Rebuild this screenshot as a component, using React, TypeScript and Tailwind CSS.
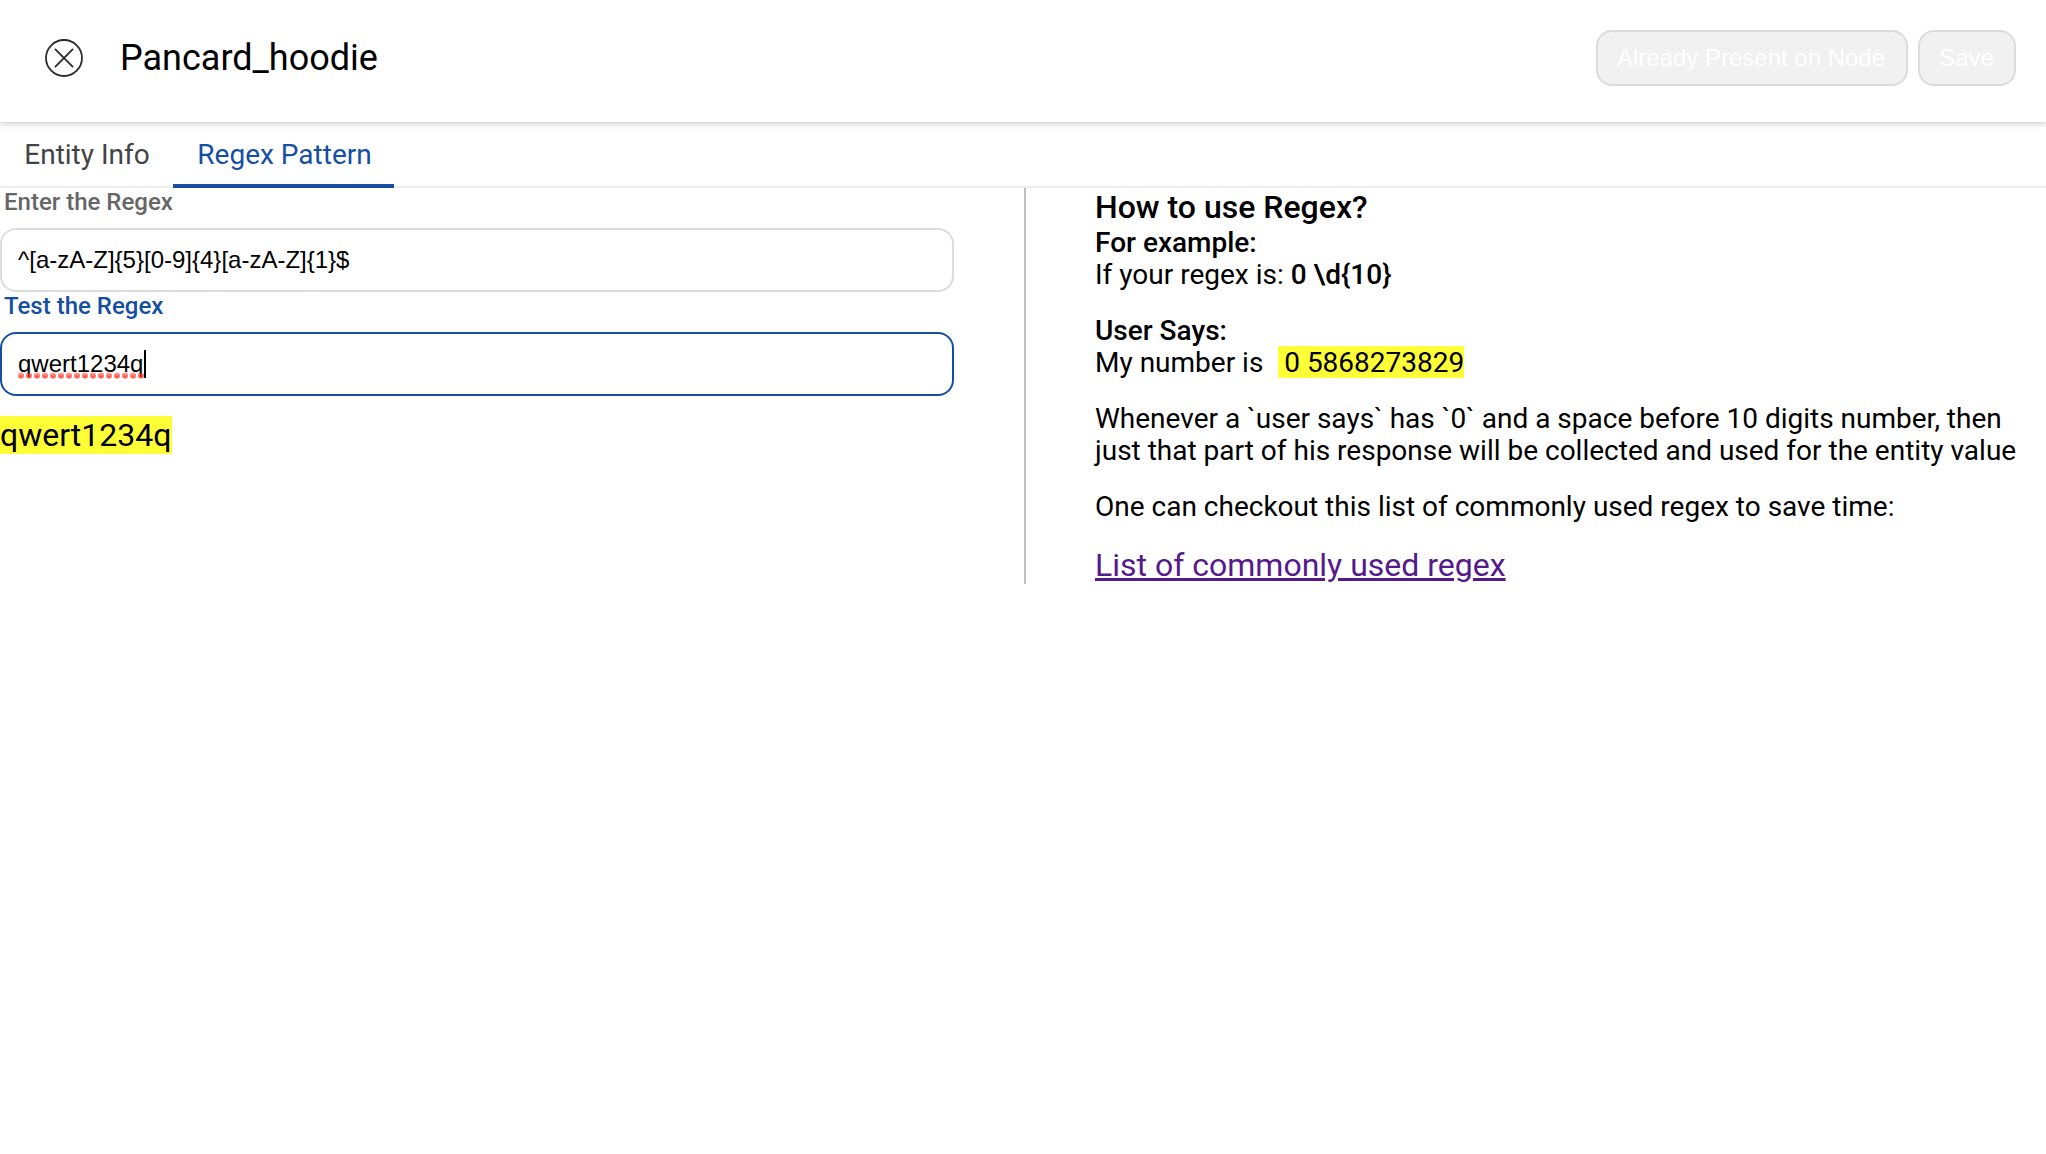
import { useState } from "react";

const tabs = ["Entity Info", "Regex Pattern"];

function CloseIcon() {
  return (
    <svg width="38" height="38" viewBox="0 0 38 38" fill="none" stroke="#2b2b2b" strokeWidth="1.8" strokeLinecap="round">
      <circle cx="19" cy="19" r="18" />
      <path d="M10.4 10.4l17.2 17.2M27.6 10.4l-17.2 17.2" />
    </svg>
  );
}

function SpellingUnderline() {
  return (
    <svg className="absolute left-0 top-[25px]" width="128" height="8">
      <defs>
        <linearGradient id="spelling" x1="0" y1="0" x2="0" y2="1">
          <stop offset="0" stopColor="#ff3b30" stopOpacity="0.45" />
          <stop offset="1" stopColor="#ff3b30" stopOpacity="0.95" />
        </linearGradient>
      </defs>
      {Array.from({ length: 16 }, (_, i) => (
        <circle key={i} cx={3 + i * 8} cy="4.5" r="3" fill="url(#spelling)" />
      ))}
    </svg>
  );
}

function Header() {
  return (
    <header className="relative flex h-[122px] items-start justify-between bg-white pl-[45px] pr-[30px] shadow-[0_2px_6px_rgba(0,0,0,0.2)]">
      <div className="flex items-start pt-[37px]">
        <button aria-label="Close" className="mt-[2px]">
          <CloseIcon />
        </button>
        <h1 className="ml-[37px] text-[36px] leading-[42px]">Pancard_hoodie</h1>
      </div>
      <div className="flex gap-[10px] pt-[30px] font-['Liberation_Sans',Arial,sans-serif] text-[24px] text-white">
        <button disabled className="h-14 w-[312px] whitespace-nowrap rounded-2xl border-2 border-[#dcdcdc] bg-[#f1f1f1] pr-[2px]">
          Already Present on Node
        </button>
        <button disabled className="h-14 w-[98px] rounded-2xl border-2 border-[#dcdcdc] bg-[#f1f1f1] pr-px">
          Save
        </button>
      </div>
    </header>
  );
}

export default function App() {
  const [active, setActive] = useState(1);
  return (
    <div className="min-h-screen overflow-hidden bg-white font-['Roboto',sans-serif] text-black">
      <Header />
      <nav className="flex h-[66px] border-b-2 border-[#ededed] text-[28px]">
        {tabs.map((t, i) => (
          <button
            key={t}
            onClick={() => setActive(i)}
            className={
              i === active
                ? "-mb-[2px] h-[66px] w-[221px] border-b-4 border-[#144fa3] pl-[2px] pt-1 text-[#144fa3]"
                : "-mb-[2px] h-[66px] w-[173px] pl-px text-[#444444]"
            }
          >
            {t}
          </button>
        ))}
      </nav>
      <main className="flex h-[396px]">
        <section className="w-[1024px] shrink-0">
          <label className="block h-10 pl-1 text-[24px] font-medium leading-[28px] text-[#666666]">Enter the Regex</label>
          <div className="flex h-16 w-[954px] items-center rounded-2xl border-2 border-[#dcdcdc] px-4 font-['Liberation_Sans',Arial,sans-serif] text-[24px]">
            {"^[a-zA-Z]{5}[0-9]{4}[a-zA-Z]{1}$"}
          </div>
          <label className="block h-10 pl-1 text-[24px] font-medium leading-[28px] text-[#144fa3]">Test the Regex</label>
          <div className="flex h-16 w-[954px] items-center rounded-2xl border-2 border-[#144fa3] px-4 font-['Liberation_Sans',Arial,sans-serif] text-[24px]">
            <span className="relative w-[126px]">
              qwert1234q
              <SpellingUnderline />
            </span>
            <span className="h-7 w-[2px] bg-black" />
          </div>
          <div className="flex pt-5">
            <span className="h-[38px] w-[172px] bg-[#ffff38] text-[32px] leading-[38px]">qwert1234q</span>
          </div>
        </section>
        <aside className="grow border-l-2 border-[#c0c0c0] pl-[69px] text-[28px] leading-8">
          <h2 className="text-[32px] font-medium leading-[38px]">How to use Regex?</h2>
          <div className="pt-px">
            <p className="font-medium">For example:</p>
            <p>
              If your regex is: <span className="font-medium">{"0 \\d{10}"}</span>
            </p>
            <p className="mt-6 font-medium">User Says:</p>
            <p className="flex whitespace-pre">
              {"My number is  "}
              <span className="-mt-px ml-px h-8 bg-[#ffff38] pt-px indent-[-1px]"> 0 5868273829</span>
            </p>
            <p className="mt-6 whitespace-nowrap">
              Whenever a `user says` has `0` and a space before 10 digits number, then
              <br />
              just that part of his response will be collected and used for the entity value
            </p>
            <p className="mt-6">One can checkout this list of commonly used regex to save time:</p>
          </div>
          <a href="#regex-list" className="mt-[23px] block text-[32px] leading-[38px] text-[#551a8b] underline">
            List of commonly used regex
          </a>
        </aside>
      </main>
    </div>
  );
}
